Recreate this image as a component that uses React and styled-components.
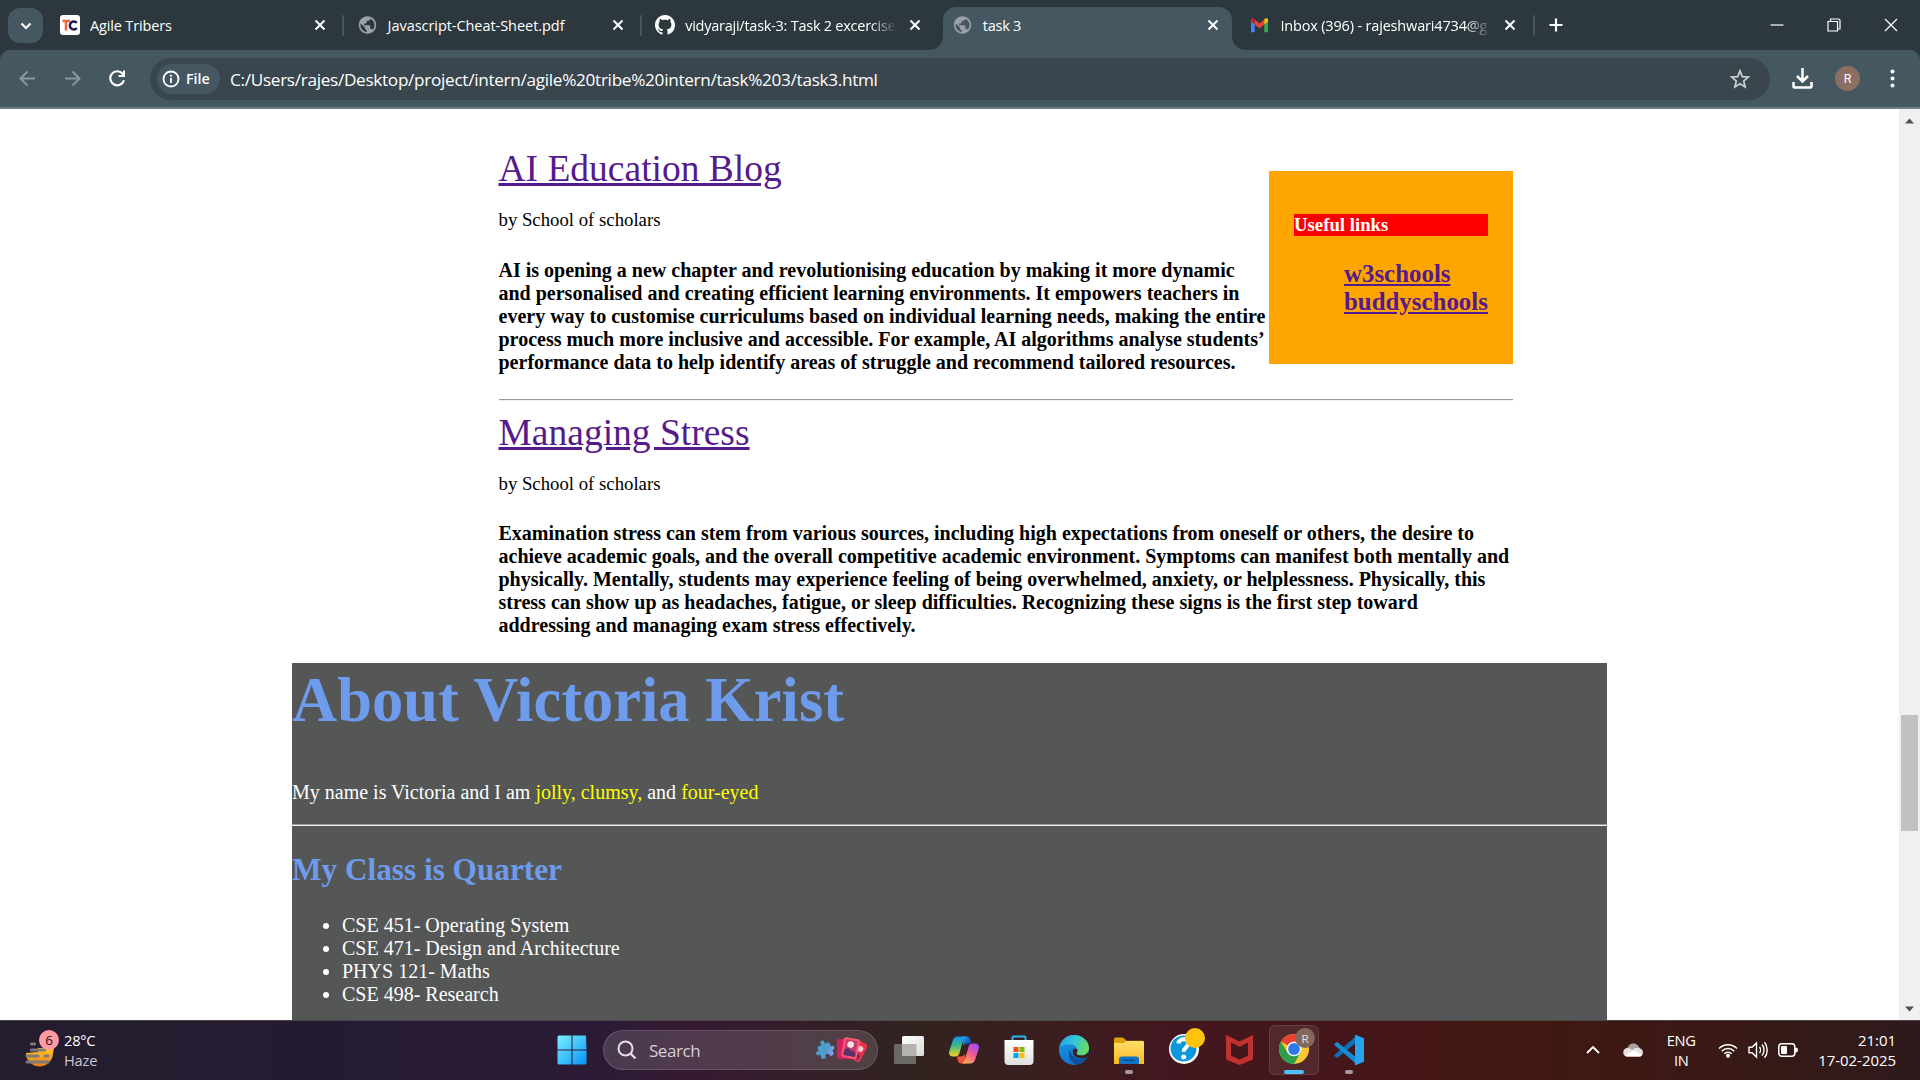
import React from "react";
import styled, { createGlobalStyle, css } from "styled-components";

const Global = createGlobalStyle`
  * { box-sizing: border-box; }
  body { margin: 0; background: #fff; overflow: hidden; }
`;

const ui = css`font-family: "Open Sans", "Noto Sans", sans-serif;`;
const serif = css`font-family: "Liberation Serif", serif;`;

const Screen = styled.div`
  width: 1920px; height: 1080px; display: flex; flex-direction: column; overflow: hidden;
`;

/* ---------- browser chrome ---------- */
const TabStrip = styled.header`
  ${ui} height: 50px; background: #2d373e; display: flex; align-items: flex-start; padding-left: 8px; color: #fff; flex: none;
`;
const TabSearch = styled.div`
  width: 35px; height: 35px; margin: 8px 7px 0 0; border-radius: 12px; background: #455760;
  display: flex; align-items: center; justify-content: center; flex: none;
`;
const Tab = styled.div`
  width: 289px; height: 43px; margin-top: 7px; padding: 0 12px 7px 10px; flex: none;
  display: flex; align-items: center; border-radius: 13px 13px 0 0; position: relative;
  background: ${(p) => (p.$active ? "#455760" : "transparent")};
  ${(p) => p.$active && css`
    &::before, &::after {
      content: ""; position: absolute; bottom: 0; width: 13px; height: 13px;
    }
    &::before { left: -13px; background: radial-gradient(circle at 0 0, transparent 12.5px, #455760 13px); }
    &::after { right: -13px; background: radial-gradient(circle at 100% 0, transparent 12.5px, #455760 13px); }
  `}
`;
const TabIcon = styled.span`width: 20px; height: 20px; display: flex; flex: none; margin-right: 10px;`;
const TabTitle = styled.span`
  flex: none; width: 212px; white-space: nowrap; font-size: 14.5px; line-height: 20px; padding-top: 1px;
  letter-spacing: ${(p) => p.$ls || 0}px; margin-right: 12px;
  ${(p) => p.$fade && css`mask-image: linear-gradient(90deg, #000 185px, transparent 212px);`}
`;
const TabGap = styled.div`
  width: 8.6px; height: 21px; margin-top: 15px; flex: none; display: flex; justify-content: center;
  &::after { content: ""; width: 2px; height: 21px; border-radius: 1px; background: ${(p) => (p.$bar ? "#455760" : "transparent")}; }
`;
const NewTab = styled.div`width: 36px; height: 50px; display: flex; align-items: center; justify-content: center;`;
const WindowButtons = styled.div`
  margin-left: auto; display: flex; height: 49px; align-items: center;
  svg { width: 57px; }
`;

const ToolbarWrap = styled.div`background: #2d373e; flex: none;`;
const Toolbar = styled.div`
  ${ui} height: 59px; background: #455760; border-bottom: 2px solid #6d7f88; border-radius: 10px 10px 0 0;
  display: flex; align-items: center; padding-left: 5px; color: #fff;
`;
const NavButton = styled.span`width: 45px; display: flex; justify-content: center; flex: none;`;
const Omnibox = styled.div`
  width: 1620px; height: 42px; border-radius: 21px; background: #3a464d; margin: 0 10px;
  display: flex; align-items: center; padding: 0 19px 0 7px; flex: none;
`;
const Chip = styled.span`
  width: 63px; height: 30px; border-radius: 15px; background: #455760; display: flex; align-items: center;
  padding-left: 5px; gap: 6px; font-size: 14.3px; font-weight: 600; letter-spacing: -0.05px; line-height: 20px;
`;
const Url = styled.span`margin-left: 10px; padding-top: 2px; font-size: 17.2px; letter-spacing: -0.31px; white-space: nowrap; line-height: 24px;`;
const StarSlot = styled.span`margin-left: auto; display: flex;`;
const ToolIcon = styled.span`width: 45px; display: flex; justify-content: center; flex: none;`;
const Avatar = styled.span`
  width: 25px; height: 25px; border-radius: 50%; background: #8d6e63; color: #fff;
  font: 12.5px/25px Roboto, sans-serif; text-align: center;
`;

/* ---------- web page ---------- */
const Viewport = styled.main`${serif} flex: 1; min-height: 0; display: flex; background: #fff; color: #000;`;
const Page = styled.div`flex: 1; overflow: hidden; padding: 38px 0 0 292px;`;
const Articles = styled.section`width: 1014.5px; margin-left: 206.5px;`;
const FirstArticle = styled.div`display: flex; justify-content: space-between; align-items: flex-start; height: 252px;`;
const ArticleText = styled.article`white-space: nowrap;`;
const BlogLink = styled.a`
  display: block; font-size: 37.5px; line-height: 43px; color: #551a8b; text-decoration: underline;
`;
const Byline = styled.p`font-size: 18.75px; line-height: 22px; margin: 19px 0 ${(p) => p.$gap}px;`;
const Copy = styled.div`font-size: 20px; line-height: 23px; font-weight: bold;`;
const Line = styled.span`display: block;`;
const LinksBox = styled.aside`
  width: 244px; height: 193px; margin-top: 24px; padding: 43px 25px 0; background: orange; font-weight: bold; flex: none;
`;
const LinksTitle = styled.h4`margin: 0; background: red; color: #fff; font-size: 18.75px; line-height: 22px;`;
const LinksList = styled.ul`list-style: none; margin: 24px 0 0; padding: 0 0 0 50px; font-size: 24.9px; line-height: 28px;`;
const LinkItem = styled.a`color: #551a8b; text-decoration: underline;`;
const Rule = styled.hr`
  margin: 0; border: 0; height: 2px; border-top: 1px solid #9a9a9a; border-bottom: 1px solid #eee;
`;
const SecondArticle = styled(ArticleText)`padding-top: 10px; height: 262px;`;
const About = styled.section`width: 1315px; height: 400px; background: #555756; color: #fff; white-space: nowrap;`;
const AboutTitle = styled.h1`margin: 0; padding-top: 2px; color: #6e9bec; font-size: 62.5px; line-height: 71px;`;
const Intro = styled.p`margin: 45px 0 20px; font-size: 20px; line-height: 23px;`;
const Mark = styled.span`color: #ff0;`;
const ClassTitle = styled.h2`margin: 26px 0 26px; color: #6e9bec; font-size: 31.25px; line-height: 36px;`;
const Classes = styled.ul`margin: 0; padding-left: 50px; font-size: 20px; line-height: 23px;`;

const Scrollbar = styled.div`
  width: 21px; background: #f0f0f0; display: flex; flex-direction: column; align-items: center;
  padding: 9px 0 8px; flex: none;
`;
const Thumb = styled.div`width: 17px; height: 116px; background: #c1c1c1; margin: 591px 0 auto;`;

/* ---------- taskbar ---------- */
const Taskbar = styled.footer`
  ${ui} height: 60px; flex: none; display: flex; align-items: center; color: #fff; border-top: 1px solid #4b4447; padding-bottom: 1px;
  background: linear-gradient(90deg, #241d2e 0%, #251b32 20%, #2b1a35 31%, #351a32 36%, #341f2a 42%, #32231f 48%, #3b1e20 55%, #43171f 61%, #45161a 70%, #421711 78%, #3b1914 87%, #2e1a1c 100%);
`;
const Weather = styled.div`width: 557px; padding-left: 24px; display: flex; align-items: center; gap: 4px; flex: none;`;
const TwoLine = styled.div`
  font-size: 14.7px; line-height: 20px; letter-spacing: ${(p) => p.$ls || 0}px; text-align: ${(p) => p.$align || "left"};
  white-space: nowrap; margin-top: -1px;
`;
const Clock = styled(TwoLine)`margin-left: 11px; font-size: 15px;`;
const Dim = styled.div`color: #c9c5cc;`;
const Search = styled.div`
  width: 275px; height: 40px; margin: 0 3.5px 0 16px; border-radius: 20px; background: rgba(255,255,255,0.14);
  border: 1px solid rgba(255,255,255,0.14); display: flex; align-items: center; padding: 0 10px 0 13px; flex: none;
  font-size: 17px; color: #d6ced5; letter-spacing: -0.45px; gap: 12px;
`;
const SearchArt = styled.span`
  margin-left: auto; display: flex;
  svg:first-child { margin-top: 4px; }
`;
const AppSlot = styled.div`
  width: 50px; height: 50px; margin: 0 2.5px; flex: none; position: relative; border-radius: 6px;
  display: flex; align-items: center; justify-content: center;
  border: 1px solid ${(p) => (p.$active ? "rgba(255,255,255,0.1)" : "transparent")};
  background: ${(p) => (p.$active ? "rgba(255,255,255,0.08)" : "transparent")};
  &::after {
    content: ""; position: absolute; bottom: 0; left: 50%; transform: translateX(-50%);
    height: 4px; border-radius: 2px;
    width: ${(p) => (p.$run === "focus" ? 20 : p.$run ? 8 : 0)}px;
    background: ${(p) => (p.$run === "focus" ? "#4cc2ff" : "#a89a9c")};
  }
`;
const BadgeArt = styled.span`display: flex; margin: -8px -6px 0 0;`;
const Tray = styled.div`margin-left: auto; padding-right: 24px; display: flex; align-items: center;`;
const TraySlot = styled.span`display: flex; justify-content: center; width: ${(p) => p.$w}px;`;

/* ---------- drawings ---------- */
const CloseX = () => (
  <svg width="12" height="12" viewBox="0 0 12 12"><path d="M1.500 1.500l9 9M10.500 1.500l-9 9" stroke="#fff" strokeWidth="2" /></svg>
);
const Globe = () => (
  <svg width="19" height="20" viewBox="0 0 24 24">
    <path fill="#9aa0a6" d="M12 1C5.900 1 1 5.900 1 12s4.900 11 11 11 11-4.900 11-11S18.100 1 12 1zm-1 19.900C6.600 20.400 3.100 16.600 3.100 12c0-.7.1-1.400.2-2L8.800 15v1.100c0 1.200 1 2.200 2.200 2.200v2.600zm7.600-2.800c-.3-.9-1.100-1.500-2.100-1.500h-1.100v-3.300c0-.6-.5-1.100-1.100-1.100H7.700V10h2.200c.6 0 1.100-.5 1.100-1.100V6.700h2.200c1.200 0 2.200-1 2.200-2.200v-.5c3.200 1.300 5.500 4.400 5.500 8 0 2.300-.9 4.400-2.300 6.100z" />
  </svg>
);
const TribersLogo = () => (
  <svg width="20" height="20" viewBox="0 0 20 20">
    <rect width="20" height="20" rx="3" fill="#fff" />
    <path d="M2.500 6h7.500M6 6v9.500" stroke="#f4623a" strokeWidth="2.500" fill="none" />
    <path d="M16.800 7.800a4 4 0 1 0 0 5.400" stroke="#1d1a5c" strokeWidth="2.500" fill="none" />
  </svg>
);
const Github = () => (
  <svg width="20" height="20" viewBox="0 0 16 16"><path fill="#fff" d="M8 0C3.580 0 0 3.580 0 8c0 3.540 2.290 6.530 5.470 7.590.4.070.55-.17.55-.38 0-.19-.01-.82-.01-1.490-2.010.37-2.530-.49-2.690-.94-.09-.23-.48-.94-.82-1.130-.28-.15-.68-.52-.01-.53.63-.01 1.080.58 1.230.82.72 1.210 1.870.87 2.330.66.07-.52.28-.87.51-1.070-1.780-.2-3.640-.89-3.640-3.950 0-.87.31-1.590.82-2.150-.08-.2-.36-1.020.08-2.120 0 0 .67-.21 2.200.82.64-.18 1.320-.27 2-.27s1.360.09 2 .27c1.530-1.040 2.200-.82 2.200-.82.44 1.100.16 1.920.08 2.120.51.56.82 1.270.82 2.150 0 3.070-1.870 3.750-3.650 3.950.29.25.54.73.54 1.480 0 1.070-.01 1.930-.01 2.200 0 .21.15.46.55.38A8.010 8.010 0 0 0 16 8c0-4.420-3.580-8-8-8z" /></svg>
);
const Gmail = () => (
  <svg width="19" height="20" viewBox="0 0 20 20">
    <path d="M1 17.500V5l4 3v9.500H2.200C1.500 17.500 1 17.500 1 17.500z" fill="#4285f4" />
    <path d="M15 17.500V8l4-3v12.500z" fill="#34a853" />
    <path d="M5 9.500V4.500l5 3.800 5-3.800v5L10 13.300z" fill="#ea4335" />
    <path d="M1 6.500V4.800C1 3 3 2.300 4.300 3.300L5 3.900v5.600z" fill="#c5221f" />
    <path d="M15 9.500V3.900l.7-.6C17 2.300 19 3 19 4.800v1.700z" fill="#fbbc04" />
  </svg>
);
const Arrow = ({ flip }) => (
  <svg width="17" height="17" viewBox="0 0 17 17" transform={flip ? "scale(-1 1)" : undefined}>
    <path d="M16 8.500H2M8.500 1.500l-7 7 7 7" fill="none" stroke="#8b979d" strokeWidth="2" />
  </svg>
);
const Reload = () => (
  <svg width="17" height="17" viewBox="0 0 17 17">
    <path d="M15 10.300A7 7 0 1 1 13.600 3.700L15 5.300" fill="none" stroke="#fff" strokeWidth="2.200" />
    <path d="M16 .5v6.500H9.500V5H14V.5z" fill="#fff" />
  </svg>
);

const Haze = () => (
  <svg width="36" height="40" viewBox="0 0 36 40">
    <defs><linearGradient id="sun" x1="0" y1="0" x2="0" y2="1"><stop offset="0" stopColor="#ffc928" /><stop offset="1" stopColor="#ee7a16" /></linearGradient></defs>
    <path d="M2 23a13.500 13.500 0 0 0 27 0l1-5H14v4z" fill="url(#sun)" />
    <g stroke="#7d7a7a" strokeWidth="3.200" strokeLinecap="round"><path d="M7.500 14h3M7.500 20h13M3 26h11M21 26h3M3 32h21" /></g>
    <circle cx="25" cy="10" r="10" fill="#ff99a4" />
    <text x="25" y="15" fontSize="13.500" textAnchor="middle" fill="#1d1216" fontFamily="Open Sans, sans-serif">6</text>
  </svg>
);
const Start = () => (
  <svg width="30" height="30" viewBox="0 0 30 30">
    <defs><linearGradient id="win" x1="0" y1="0" x2="1" y2="1"><stop offset="0" stopColor="#7cf0ff" /><stop offset="1" stopColor="#0593f7" /></linearGradient></defs>
    <path fill="url(#win)" d="M1.500.5H14.500V14.500H.5V1.500zM15.500.5H29L29.500 14.500H15.500zM.5 15.500H14.500V29.500H1.500L.5 28.500zM15.500 15.500H29.500V28.500L28.500 29.500H15.500z" />
  </svg>
);
const Puzzle = () => (
  <svg width="21" height="21" viewBox="0 0 24 24">
    <defs><linearGradient id="pz" x1="0" y1="0" x2="1" y2="1"><stop offset="0" stopColor="#3fa9c9" /><stop offset=".6" stopColor="#4f9bd0" /><stop offset="1" stopColor="#b9a2f0" /></linearGradient></defs>
    <path transform="rotate(-22 12 12)" fill="url(#pz)" d="M20.500 11H19V7.500a2 2 0 0 0-2-2h-3.500c1.200-2 .5-4.500-1.800-4.500s-3 2.500-1.800 4.500H6a2 2 0 0 0-2 2V11c-1.800-1.200-3.700-.3-3.700 1.700S2.200 15.600 4 14.500V19a2 2 0 0 0 2 2h3.200c-1-2 0-3.800 2.300-3.800s3.300 1.800 2.300 3.800H17a2 2 0 0 0 2-2v-3.500h1.500a2.300 2.300 0 0 0 0-4.500z" />
  </svg>
);
const Cards = () => (
  <svg width="31" height="30" viewBox="0 0 31 30">
    <rect x="1" y="4" width="17" height="20" rx="2" fill="#d31f63" />
    <g transform="rotate(28 22 16)"><rect x="14.500" y="6" width="14" height="20" rx="2" fill="#e8304f" /><circle cx="23" cy="13" r="3" fill="#ffd1cf" /><path d="M17 24v-5l4-3 5 4v4z" fill="#6a2750" /></g>
    <g transform="rotate(10 14 13)"><rect x="6.500" y="3" width="16" height="20" rx="2" fill="#ff5b6c" /><rect x="8.500" y="5" width="12" height="16" rx="1" fill="#c43a72" /><circle cx="14" cy="9.500" r="3.300" fill="#ffe3dc" /><path d="M8.500 21v-5l4-3 3 3 2-1 3 3v3z" fill="#573168" /></g>
  </svg>
);
const TaskView = () => (
  <svg width="30" height="28" viewBox="0 0 30 28">
    <defs><linearGradient id="tv" x1="0" y1="0" x2="1" y2="1"><stop offset="0" stopColor="#fff" /><stop offset="1" stopColor="#dcdcdc" /></linearGradient></defs>
    <rect x="0" y="8" width="22" height="20" rx="1.500" fill="#6b6966" />
    <rect x="8" y="0" width="22" height="20" rx="1.500" fill="url(#tv)" /><rect x="8" y="8" width="14.500" height="12" fill="#b5b3b2" />
  </svg>
);
const Copilot = () => (
  <svg width="30" height="28" viewBox="0 0 30 28">
    <defs>
      <linearGradient id="cpa" x1="0" y1="0" x2="0" y2="1"><stop offset="0" stopColor="#1790f0" /><stop offset=".45" stopColor="#3cb98a" /><stop offset="1" stopColor="#f5cf1b" /></linearGradient>
      <linearGradient id="cpb" x1=".7" y1="0" x2=".2" y2="1"><stop offset="0" stopColor="#a64df3" /><stop offset=".5" stopColor="#f35a8d" /><stop offset="1" stopColor="#ffb357" /></linearGradient>
      <linearGradient id="cpc" x1="0" y1="0" x2="1" y2="1"><stop offset="0" stopColor="#1aa4f5" /><stop offset="1" stopColor="#143bb0" /></linearGradient>
    </defs>
    <path d="M13 .5h4.500c2 0 3 1.200 3.600 3l1.200 4H18c-2 0-3 1.300-3.500 3z" fill="url(#cpc)" />
    <path d="M17 27.500h-4.500c-2 0-3-1.200-3.600-3L7.800 20.500H12c2 0 3-1.300 3.500-3z" fill="#f4523d" />
    <path d="M8.500.5H17c-1.400.6-2.200 1.600-2.700 3.200L10.500 17c-.6 2.200-1.800 3.500-4 3.500H4c-3.300 0-4.600-2.600-3.700-5.600L4 4C4.700 1.800 6.200.5 8.500.5z" fill="url(#cpa)" />
    <path d="M21.500 27.500H13c1.400-.6 2.200-1.600 2.700-3.200L19.500 11c.6-2.200 1.800-3.500 4-3.500H26c3.300 0 4.600 2.600 3.700 5.600L26 24c-.7 2.200-2.200 3.500-4.500 3.500z" fill="url(#cpb)" />
  </svg>
);
const Store = () => (
  <svg width="30" height="30" viewBox="0 0 30 30">
    <defs><linearGradient id="st" x1="0" y1="0" x2="0" y2="1"><stop offset="0" stopColor="#fff" /><stop offset="1" stopColor="#dfdfdf" /></linearGradient></defs>
    <path d="M8.500 6V2.500a1 1 0 0 1 1-1h11a1 1 0 0 1 1 1V6" stroke="#27b4f0" strokeWidth="2" fill="none" />
    <path d="M.5 5h29v21a4 4 0 0 1-4 4h-21a4 4 0 0 1-4-4z" fill="url(#st)" />
    <path d="M9.500 12h5v5h-5z" fill="#f25022" /><path d="M15.500 12h5v5h-5z" fill="#7fba00" /><path d="M9.500 18h5v5h-5z" fill="#00a4ef" /><path d="M15.500 18h5v5h-5z" fill="#ffb900" />
  </svg>
);
const Edge = () => (
  <svg width="30" height="30" viewBox="0 0 30 30">
    <defs>
      <linearGradient id="ea" x1="0" y1=".2" x2="1" y2=".5"><stop offset="0" stopColor="#2a9fe6" /><stop offset=".5" stopColor="#35c5d8" /><stop offset="1" stopColor="#69dd57" /></linearGradient>
      <linearGradient id="eb" x1="0" y1="0" x2=".5" y2="1"><stop offset="0" stopColor="#1c9ae6" /><stop offset="1" stopColor="#1073cd" /></linearGradient>
    </defs>
    <circle cx="15" cy="15" r="15" fill="url(#eb)" />
    <path d="M.3 12.500C1.500 5.500 7.500 0 15 0c8.500 0 15 6 15 13 0 4.500-3.500 7.500-7.500 7.500-3 0-5-1-5-2.300 0-.8 1-1.300 1-3.200 0-3-3.500-5.800-8-5.800-4.500 0-8.500 1.500-10.200 3.300z" fill="url(#ea)" />
    <path d="M11 14.500c-2 4-1.500 11 5 14.800 4.500.5 9.500-2 12-6.300.3-.6-.3-1-.8-.7-6 3-15.500 1.500-16.200-7.800z" fill="#114f9d" />
    <path d="M17.500 18.200c0 1.300 2 2.300 5 2.300 3 0 5.500-1.500 6.800-3.800L30 19l-1.800 3c-4 2-9.500 1.500-12.700-1-2-1.800-2.500-4.800-1-7 1.500-.8 4-.2 4 1.200 0 1.500-1 2.200-1 3z" fill="#3b1e20" />
  </svg>
);
const Folder = () => (
  <svg width="30" height="27" viewBox="0 0 30 27">
    <defs><linearGradient id="fo" x1="0" y1="0" x2="0" y2="1"><stop offset="0" stopColor="#ffdf6b" /><stop offset="1" stopColor="#f9b922" /></linearGradient></defs>
    <path d="M0 8V2.200C0 1.200.8.500 1.700.5H9l3.500 3.300H28.500c1 0 1.500.6 1.500 1.500V10z" fill="#dfa10c" />
    <path d="M0 6h10l2.500-2H28.500A1.500 1.500 0 0 1 30 5.500V27H0z" fill="url(#fo)" />
    <path d="M5 27v-4.500A3 3 0 0 1 8 19.500h14a3 3 0 0 1 3 3V27z" fill="#1072c8" /><path d="M9 23.200h12" stroke="#0a4b8c" strokeWidth="1.300" />
  </svg>
);
const Help = () => (
  <svg width="36" height="38" viewBox="0 0 36 38">
    <circle cx="15" cy="22" r="15" fill="#fff" /><circle cx="14.500" cy="21.500" r="13" fill="#0a98da" />
    <path d="M9.500 16.500c.6-6 10.500-5.500 10 .2-.4 3.700-4.800 3.600-4.800 8" fill="none" stroke="#fff" strokeWidth="4" />
    <circle cx="14.700" cy="30" r="2.500" fill="#fff" /><circle cx="26" cy="11" r="10" fill="#ffc20e" />
  </svg>
);
const McAfee = () => (
  <svg width="27" height="30" viewBox="0 0 27 30"><path fill="#c0322f" d="M0 0l13.500 6.500L27 0v24.500L13.500 30 0 24.500zM5 7.500v13.300l8.500 3.600 8.500-3.600V7.500l-8.500 4.300z" /></svg>
);
const Chrome = () => (
  <svg width="36" height="38" viewBox="0 0 36 38">
    <g transform="translate(0 7)">
      <circle cx="15" cy="15" r="15" fill="#fcc934" />
      <path d="M15 15L2 7.500A15 15 0 0 1 28 7.500H15z" fill="#ea4335" />
      <path d="M2 7.500A15 15 0 0 0 15 30l6.500-11.200L8.500 18.700z" fill="#2f9e4c" />
      <circle cx="15" cy="15" r="7.300" fill="#fff" /><circle cx="15" cy="15" r="5.900" fill="#2f78ee" />
    </g>
    <circle cx="26" cy="11" r="10" fill="#84685f" />
    <text x="26" y="15.500" fontSize="11.500" textAnchor="middle" fill="#e5dcd9" fontFamily="Roboto, sans-serif">R</text>
  </svg>
);
const VSCode = () => (
  <svg width="30" height="30" viewBox="0 0 30 30">
    <path d="M0 20.500l2 2 1.500.2L23 7V.3L1 19.500z" fill="#0a72b8" /><path d="M0 9.500l2-2 1.500-.2L23 23v6.700L1 10.500z" fill="#168bd2" />
    <path d="M22 0l8 3.200v23.600L22 30c-1 .3-1.500-.3-1-1.200V1.200C20.500.3 21-.3 22 0z" fill="#27a4ee" />
  </svg>
);

/* ---------- content ---------- */
const tabs = [
  { icon: <TribersLogo />, title: "Agile Tribers", ls: -0.15, bar: true },
  { icon: <Globe />, title: "Javascript-Cheat-Sheet.pdf", ls: -0.05, bar: true },
  { icon: <Github />, title: "vidyaraji/task-3: Task 2 excercise", ls: -0.25, fade: true },
  { icon: <Globe />, title: "task 3", ls: -0.25, active: true },
  { icon: <Gmail />, title: "Inbox (396) - rajeshwari4734@g", ls: -0.17, fade: true, bar: true },
];

const firstCopy = [
  "AI is opening a new chapter and revolutionising education by making it more dynamic",
  "and personalised and creating efficient learning environments. It empowers teachers in",
  "every way to customise curriculums based on individual learning needs, making the entire",
  "process much more inclusive and accessible. For example, AI algorithms analyse students’",
  "performance data to help identify areas of struggle and recommend tailored resources.",
];
const secondCopy = [
  "Examination stress can stem from various sources, including high expectations from oneself or others, the desire to",
  "achieve academic goals, and the overall competitive academic environment. Symptoms can manifest both mentally and",
  "physically. Mentally, students may experience feeling of being overwhelmed, anxiety, or helplessness. Physically, this",
  "stress can show up as headaches, fatigue, or sleep difficulties. Recognizing these signs is the first step toward",
  "addressing and managing exam stress effectively.",
];
const classes = ["CSE 451- Operating System", "CSE 471- Design and Architecture", "PHYS 121- Maths", "CSE 498- Research"];
const apps = [
  { art: <TaskView /> }, { art: <Copilot /> }, { art: <Store /> }, { art: <Edge /> }, { art: <Folder />, run: "idle" },
  { art: <Help />, badge: true }, { art: <McAfee /> }, { art: <Chrome />, badge: true, active: true, run: "focus" }, { art: <VSCode />, run: "idle" },
];

export default function App() {
  return (
    <Screen>
      <Global />
      <TabStrip>
        <TabSearch><svg width="12" height="8" viewBox="0 0 12 8"><path d="M1.500 1.500L6 6l4.500-4.500" fill="none" stroke="#fff" strokeWidth="2.200" /></svg></TabSearch>
        {tabs.map((t) => (
          <React.Fragment key={t.title}>
            <Tab $active={t.active}>
              <TabIcon>{t.icon}</TabIcon>
              <TabTitle $ls={t.ls} $fade={t.fade}>{t.title}</TabTitle>
              <CloseX />
            </Tab>
            <TabGap $bar={t.bar} />
          </React.Fragment>
        ))}
        <NewTab><svg width="14" height="14" viewBox="0 0 14 14"><path d="M7 .5v13M.5 7h13" stroke="#fff" strokeWidth="2.200" /></svg></NewTab>
        <WindowButtons>
          <svg height="14" viewBox="-28 -7 57 14"><path d="M-6.500 0H6.500" stroke="#fff" strokeWidth="1.200" /></svg>
          <svg height="14" viewBox="-28 -7 57 14"><path d="M-6-3.500h9.500v9.500H-6zM-3.500-4v-2H4.500c1 0 1.500.6 1.500 1.500V4H4" fill="none" stroke="#fff" strokeWidth="1.200" /></svg>
          <svg height="14" viewBox="-28 -7 57 14"><path d="M-6-6L6 6M6-6L-6 6" stroke="#fff" strokeWidth="1.200" /></svg>
        </WindowButtons>
      </TabStrip>
      <ToolbarWrap>
        <Toolbar>
          <NavButton><Arrow /></NavButton>
          <NavButton><Arrow flip /></NavButton>
          <NavButton><Reload /></NavButton>
          <Omnibox>
            <Chip>
              <svg width="18" height="18" viewBox="0 0 18 18"><circle cx="9" cy="9" r="7.500" fill="none" stroke="#fff" strokeWidth="1.800" /><path d="M9 8v5M9 4.800v1.900" stroke="#fff" strokeWidth="1.800" /></svg>
              File
            </Chip>
            <Url>C:/Users/rajes/Desktop/project/intern/agile%20tribe%20intern/task%203/task3.html</Url>
            <StarSlot><svg width="22" height="22" viewBox="0 0 24 24"><path d="M12 3.200l2.500 6.200 6.600.5-5.100 4.300 1.600 6.500L12 17.200l-5.600 3.500L8 14.200 2.900 9.900l6.600-.5z" fill="none" stroke="#c7cdd0" strokeWidth="1.900" /></svg></StarSlot>
          </Omnibox>
          <ToolIcon><svg width="21" height="21" viewBox="0 0 21 21"><path d="M10.500 0v13M5 8l5.500 5.500L16 8M1.500 14v4.500a1 1 0 0 0 1 1h16a1 1 0 0 0 1-1V14" fill="none" stroke="#fff" strokeWidth="2.500" /></svg></ToolIcon>
          <ToolIcon><Avatar>R</Avatar></ToolIcon>
          <ToolIcon><svg width="5" height="19" viewBox="0 0 5 19"><g fill="#fff"><circle cx="2.500" cy="2.500" r="2" /><circle cx="2.500" cy="9.500" r="2" /><circle cx="2.500" cy="16.500" r="2" /></g></svg></ToolIcon>
        </Toolbar>
      </ToolbarWrap>

      <Viewport>
        <Page>
          <Articles>
            <FirstArticle>
              <ArticleText>
                <BlogLink>AI Education Blog</BlogLink>
                <Byline $gap={28}>by School of scholars</Byline>
                <Copy>{firstCopy.map((l) => <Line key={l}>{l}</Line>)}</Copy>
              </ArticleText>
              <LinksBox>
                <LinksTitle>Useful links</LinksTitle>
                <LinksList>
                  <li><LinkItem>w3schools</LinkItem></li>
                  <li><LinkItem>buddyschools</LinkItem></li>
                </LinksList>
              </LinksBox>
            </FirstArticle>
            <Rule />
            <SecondArticle>
              <BlogLink>Managing Stress</BlogLink>
              <Byline $gap={27}>by School of scholars</Byline>
              <Copy>{secondCopy.map((l) => <Line key={l}>{l}</Line>)}</Copy>
            </SecondArticle>
          </Articles>
          <About>
            <AboutTitle>About Victoria Krist</AboutTitle>
            <Intro>My name is Victoria and I am <Mark>jolly, clumsy,</Mark> and <Mark>four-eyed</Mark></Intro>
            <Rule />
            <ClassTitle>My Class is Quarter</ClassTitle>
            <Classes>{classes.map((c) => <li key={c}>{c}</li>)}</Classes>
          </About>
        </Page>
        <Scrollbar>
          <svg width="9" height="6" viewBox="0 0 9 6"><path d="M0 5.500L4.500.5 9 5.500z" fill="#505050" /></svg>
          <Thumb />
          <svg width="9" height="6" viewBox="0 0 9 6"><path d="M0 .5L4.500 5.500 9 .5z" fill="#505050" /></svg>
        </Scrollbar>
      </Viewport>

      <Taskbar>
        <Weather>
          <Haze />
          <TwoLine $ls={-0.25}><div>28°C</div><Dim>Haze</Dim></TwoLine>
        </Weather>
        <Start />
        <Search>
          <svg width="20" height="20" viewBox="0 0 20 20"><circle cx="8.500" cy="8.500" r="7" fill="none" stroke="#e4dde3" strokeWidth="2" /><path d="M13.500 13.500l5 5" stroke="#e4dde3" strokeWidth="2.400" /></svg>
          Search
          <SearchArt><Puzzle /><Cards /></SearchArt>
        </Search>
        {apps.map((a, i) => (
          <AppSlot key={i} $active={a.active} $run={a.run}>{a.badge ? <BadgeArt>{a.art}</BadgeArt> : a.art}</AppSlot>
        ))}
        <Tray>
          <TraySlot $w={40}><svg width="14" height="8" viewBox="0 0 14 8"><path d="M1 7l6-6 6 6" fill="none" stroke="#fff" strokeWidth="1.800" /></svg></TraySlot>
          <TraySlot $w={40}><svg width="20" height="14" viewBox="0 0 20 14"><path d="M4 8C4 3 7 .5 10.500.5S16 3 17 6z" fill="#aaa0a0" /><path d="M4.500 13.500a4.300 4.300 0 0 1 0-8.600c2 0 3 .6 5 2.100 1.500-1.700 3-2.300 5-2 3.300 0 5.500 2 5.500 4.600s-2 3.900-3.500 3.900z" fill="#e7e2e2" /><path d="M1.500 12.500L11 7.500l8 4.500c-.7 1-1.700 1.500-2.500 1.500h-12c-1.200 0-2.300-.4-3-1z" fill="#fff" /></svg></TraySlot>
          <TraySlot $w={56}><TwoLine $align="center" $ls={-0.4}>ENG<br />IN</TwoLine></TraySlot>
          <TraySlot $w={38}><svg width="20" height="16" viewBox="0 0 20 16"><g fill="none" stroke="#fff" strokeWidth="1.500"><path d="M1 6.500a12.500 12.500 0 0 1 18 0M3.700 9.300a8.700 8.700 0 0 1 12.600 0M6.300 11.800a5.300 5.300 0 0 1 7.400 0" /></g><circle cx="10" cy="13.800" r="2" fill="#fff" /></svg></TraySlot>
          <TraySlot $w={22}><svg width="20" height="18" viewBox="0 0 20 18"><g fill="none" stroke="#fff" strokeWidth="1.400"><path d="M1 6.300h3L8.500 2v14L4 11.700H1z" /><path d="M11.500 6c1.300 1.600 1.300 4.400 0 6M14 3.500c2.700 3 2.700 8 0 11M16.500 1.200c3.600 4.200 3.600 11.400 0 15.600" /></g></svg></TraySlot>
          <TraySlot $w={38}><svg width="20" height="14" viewBox="0 0 20 14"><rect x=".8" y=".8" width="16" height="12.400" rx="3" fill="none" stroke="#fff" strokeWidth="1.500" /><rect x="3" y="3" width="6" height="8" rx="1" fill="#fff" /><path d="M17 4.500c2 0 3 .8 3 2.500s-1 2.500-3 2.500z" fill="#fff" /></svg></TraySlot>
          <Clock $align="right" $ls={-0.05}>21:01<br />17-02-2025</Clock>
        </Tray>
      </Taskbar>
    </Screen>
  );
}
